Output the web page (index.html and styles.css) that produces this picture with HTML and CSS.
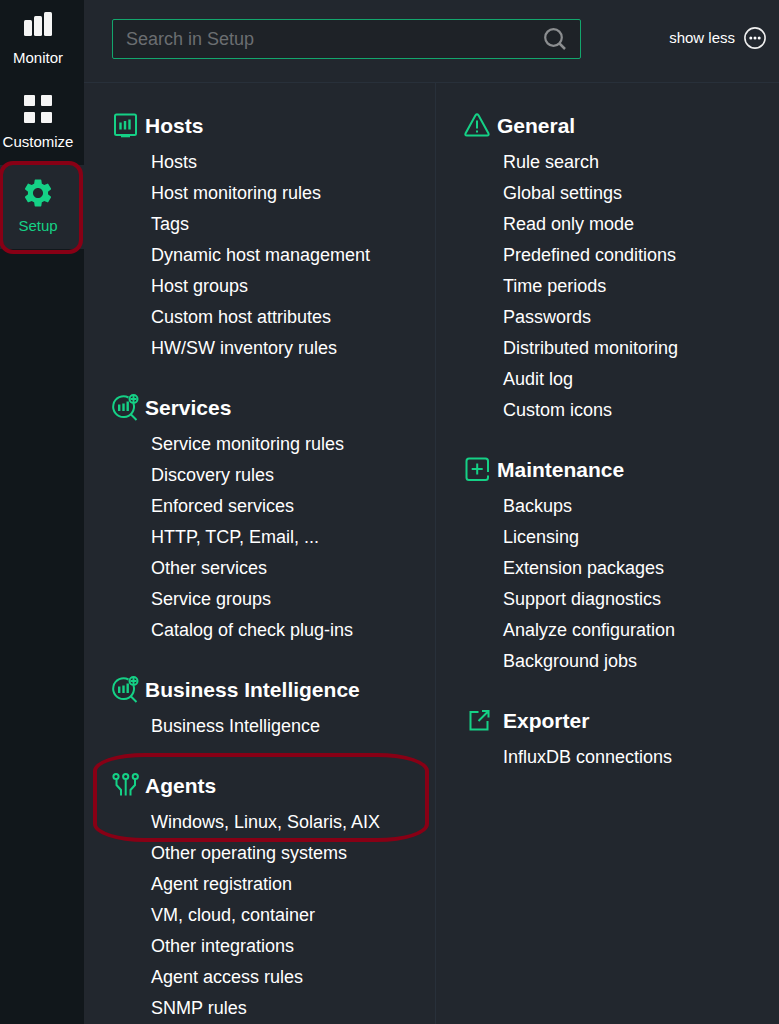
FILE: index.html
```
<!DOCTYPE html>
<html lang="en">

<head>
  <meta charset="UTF-8">
  <meta name="viewport" content="width=device-width, initial-scale=1.0">
  <title>Setup</title>

  <link rel="stylesheet" href="styles.css">
</head>

<body>
  <nav class="sidebar">
    <a class="nav-item" href="#monitor">
      <svg class="nav-icon" viewBox="0 0 28 28" fill="#f5f5f5">
        <rect x="0" y="9" width="8" height="16" rx="1.500" />
        <rect x="10" y="5" width="8" height="20" rx="1.500" />
        <rect x="20" y="1" width="8" height="24" rx="1.500" />
      </svg>
      <span>Monitor</span>
    </a>
    <a class="nav-item" href="#customize">
      <svg class="nav-icon" viewBox="0 0 28 28" fill="#f5f5f5">
        <rect x="0" y="0" width="11" height="11" rx="1" />
        <rect x="17" y="0" width="11" height="11" rx="1" />
        <rect x="0" y="17" width="11" height="11" rx="1" />
        <rect x="17" y="17" width="11" height="11" rx="1" />
      </svg>
      <span>Customize</span>
    </a>
    <a class="nav-item active" href="#setup">
      <svg class="nav-icon" viewBox="2 2 20 20" fill="#15d186">
        <path d="M19.14 12.94c.04-.3.06-.61.06-.94 0-.32-.02-.64-.07-.94l2.03-1.58a.49.49 0 0 0 .12-.61l-1.92-3.32a.488.488 0 0 0-.59-.22l-2.39.96c-.5-.38-1.03-.7-1.62-.94l-.36-2.54a.484.484 0 0 0-.48-.41h-3.84c-.24 0-.43.17-.47.41l-.36 2.54c-.59.24-1.13.57-1.62.94l-2.39-.96c-.22-.08-.47 0-.59.22L2.74 8.87c-.12.21-.08.47.12.61l2.03 1.58c-.05.3-.09.63-.09.94s.02.64.07.94l-2.03 1.58a.49.49 0 0 0-.12.61l1.92 3.32c.12.22.37.29.59.22l2.39-.96c.5.38 1.03.7 1.62.94l.36 2.54c.05.24.24.41.48.41h3.84c.24 0 .44-.17.47-.41l.36-2.54c.59-.24 1.13-.56 1.62-.94l2.39.96c.22.08.47 0 .59-.22l1.92-3.32c.12-.22.07-.47-.12-.61l-2.01-1.58zM12 15.6c-1.98 0-3.6-1.62-3.6-3.6s1.62-3.6 3.6-3.6 3.6 1.62 3.6 3.6-1.62 3.6-3.6 3.6z" />
      </svg>
      <span>Setup</span>
      <i class="marker marker-nav"></i>
    </a>
  </nav>

  <main>
    <header class="topbar">
      <form class="search">
        <input type="text" name="search" aria-label="Search in Setup" placeholder="Search in Setup">
        <button class="search-btn" type="button" aria-label="Search">
          <svg width="22" height="22" viewBox="0 0 22 22" fill="none" stroke="#8c8e90" stroke-width="2.200">
            <circle cx="9.500" cy="9.500" r="8.300" />
            <path d="M15.500 15.500L21 21" stroke-width="2.500" />
          </svg>
        </button>
      </form>
      <button class="show-less" type="button">
        show less
        <svg width="22" height="22" viewBox="0 0 22 22">
          <circle cx="11" cy="11" r="10.100" fill="none" stroke="#eee" stroke-width="1.600" />
          <g fill="#fff">
            <circle cx="6.800" cy="11" r="1.500" />
            <circle cx="11" cy="11" r="1.500" />
            <circle cx="15.200" cy="11" r="1.500" />
          </g>
        </svg>
      </button>
    </header>

    <div class="columns">
      <div class="column">
        <section class="topic">
          <h2>
            <svg class="icon" viewBox="0 0 26 26">
              <rect x="3" y="2.500" width="21" height="20.500" rx="1.500" />
              <path d="M9 24.300h9" />
              <path d="M8.500 10.500v7M13 9v8.500M17.500 7.500v10" stroke-width="2.400" />
            </svg>
            Hosts
          </h2>
          <ul>
            <li><a href="#">Hosts</a></li>
            <li><a href="#">Host monitoring rules</a></li>
            <li><a href="#">Tags</a></li>
            <li><a href="#">Dynamic host management</a></li>
            <li><a href="#">Host groups</a></li>
            <li><a href="#">Custom host attributes</a></li>
            <li><a href="#">HW/SW inventory rules</a></li>
          </ul>
        </section>

        <section class="topic">
          <h2>
            <svg class="icon" viewBox="0 0 26 26">
              <path d="M16.500 3.500A10.400 10.400 0 1 0 21.500 9.500M18.500 20L24.500 26" />
              <path d="M7.200 10.500v6.500M11.500 9.500v7.500M15.700 7.500v9.500" stroke-width="2.400" />
              <circle cx="21.500" cy="5" r="4" />
              <path d="M21.500 2v6M18.500 5h6" />
            </svg>
            Services
          </h2>
          <ul>
            <li><a href="#">Service monitoring rules</a></li>
            <li><a href="#">Discovery rules</a></li>
            <li><a href="#">Enforced services</a></li>
            <li><a href="#">HTTP, TCP, Email, ...</a></li>
            <li><a href="#">Other services</a></li>
            <li><a href="#">Service groups</a></li>
            <li><a href="#">Catalog of check plug-ins</a></li>
          </ul>
        </section>

        <section class="topic">
          <h2>
            <svg class="icon" viewBox="0 0 26 26">
              <path d="M16.500 3.500A10.400 10.400 0 1 0 21.500 9.500M18.500 20L24.500 26" />
              <path d="M7.200 10.500v6.500M11.500 9.500v7.500M15.700 7.500v9.500" stroke-width="2.400" />
              <circle cx="21.500" cy="5" r="4" />
              <path d="M21.500 2v6M18.500 5h6" />
            </svg>
            Business Intelligence
          </h2>
          <ul>
            <li><a href="#">Business Intelligence</a></li>
          </ul>
        </section>

        <section class="topic">
          <h2>
            <svg class="icon" viewBox="0 0 26 26">
              <circle cx="4" cy="4.500" r="2.600" />
              <circle cx="13.700" cy="4.500" r="2.600" />
              <circle cx="23.300" cy="4.500" r="2.600" />
              <path d="M4.500 7v6l4.500 5v5.500M13.700 7v16.500M23 7v6l-4.500 5v5.500" />
            </svg>
            Agents
          </h2>
          <ul>
            <li><a href="#">Windows, Linux, Solaris, AIX</a></li>
            <li><a href="#">Other operating systems</a></li>
            <li><a href="#">Agent registration</a></li>
            <li><a href="#">VM, cloud, container</a></li>
            <li><a href="#">Other integrations</a></li>
            <li><a href="#">Agent access rules</a></li>
            <li><a href="#">SNMP rules</a></li>
          </ul>
          <i class="marker marker-topic"></i>
        </section>
      </div>

      <div class="column">
        <section class="topic">
          <h2>
            <svg class="icon" viewBox="0 0 26 26">
              <path d="M11.500 3.300L1.500 21.500Q.8 23.500 2.800 23.500H23.200Q25.200 23.500 24.500 21.500L14.500 3.300Q13 1.200 11.500 3.300Z" />
              <path d="M13 8.500v8M13 18.500v2" />
            </svg>
            General
          </h2>
          <ul>
            <li><a href="#">Rule search</a></li>
            <li><a href="#">Global settings</a></li>
            <li><a href="#">Read only mode</a></li>
            <li><a href="#">Predefined conditions</a></li>
            <li><a href="#">Time periods</a></li>
            <li><a href="#">Passwords</a></li>
            <li><a href="#">Distributed monitoring</a></li>
            <li><a href="#">Audit log</a></li>
            <li><a href="#">Custom icons</a></li>
          </ul>
        </section>

        <section class="topic">
          <h2>
            <svg class="icon" viewBox="0 0 26 26">
              <path d="M24 16V5Q24 2.500 21.500 2.500H5Q2.500 2.500 2.500 5V21.500Q2.500 24 5 24H21.500Q24 24 24 21.500V19.500" />
              <path d="M13.200 7.500v11M7.700 13h11" />
            </svg>
            Maintenance
          </h2>
          <ul>
            <li><a href="#">Backups</a></li>
            <li><a href="#">Licensing</a></li>
            <li><a href="#">Extension packages</a></li>
            <li><a href="#">Support diagnostics</a></li>
            <li><a href="#">Analyze configuration</a></li>
            <li><a href="#">Background jobs</a></li>
          </ul>
        </section>

        <section class="topic topic-plain">
          <h2>
            <svg class="icon" viewBox="0 0 26 26">
              <path d="M14.500 5H6.500V22.500H23.500V14" />
              <path d="M14.500 14L24 4.500M18 4H24.500V10.500" />
            </svg>
            Exporter
          </h2>
          <ul>
            <li><a href="#">InfluxDB connections</a></li>
          </ul>
        </section>
      </div>
    </div>
  </main>
</body>

</html>
```
FILE: styles.css
```
* {
  box-sizing: border-box;
}

body {
  background: #22272e;
  color: #fff;
  display: flex;
  font-family: "Liberation Sans", Arial, sans-serif;
  margin: 0;
  min-height: 100vh;
}

a {
  color: inherit;
  text-decoration: none;
}

/* sidebar */
.sidebar {
  background: #11171b;
  flex: 0 0 84px;
  margin-top: -3px;
}

.nav-item {
  align-items: center;
  display: flex;
  flex-direction: column;
  font-size: 15px;
  gap: 10px;
  height: 84px;
  line-height: 18px;
  padding: 14px 8px 0 0;
  position: relative;
}

.nav-item.active {
  background: #22272e;
  color: #15d186;
}

.nav-icon {
  height: 28px;
  width: 28px;
}

/* red markers drawn over the menu */
.marker {
  border: 4px solid #880015;
  pointer-events: none;
  position: absolute;
}

.marker-nav {
  border-radius: 14px;
  inset: -4px 1px -5px -1px;
}

.marker-topic {
  border-radius: 52px / 18px;
  height: 89px;
  left: 9px;
  right: 6px;
  top: -12px;
}

/* top bar */
main {
  flex: 1;
}

.topbar {
  align-items: center;
  border-bottom: 1px solid #28303a;
  display: flex;
  gap: 88px;
  height: 83px;
  padding: 0 13px 4px 28px;
}

.search {
  align-items: center;
  background: #1e2227;
  border: 1px solid #13a66d;
  border-radius: 2px;
  display: flex;
  flex: 1;
  height: 40px;
  padding: 0 14px 0 13px;
}

.search input {
  background: none;
  border: 0;
  color: #fff;
  flex: 1;
  font: 18px "Liberation Sans", Arial, sans-serif;
  min-width: 0;
  outline: 0;
  padding: 0;
}

.search input::placeholder {
  color: #6b6e71;
}

button {
  align-items: center;
  background: none;
  border: 0;
  color: inherit;
  cursor: pointer;
  display: flex;
  font: 15px "Liberation Sans", Arial, sans-serif;
  padding: 0;
}

.show-less {
  gap: 9px;
  padding-bottom: 3px;
  white-space: nowrap;
}

/* menu topics */
.columns {
  display: grid;
  grid-template-columns: 352fr 343fr;
}

.column {
  padding-top: 22px;
}

.column:first-child {
  border-right: 1px solid #28303a;
}

.topic {
  margin-bottom: 23px;
  position: relative;
}

.topic h2 {
  align-items: center;
  display: flex;
  font-size: 21px;
  gap: 7px;
  height: 42px;
  margin: 0;
  padding-left: 28px;
}

.topic-plain h2 {
  gap: 13px;
}

.icon {
  fill: none;
  height: 26px;
  margin-bottom: 3px;
  overflow: visible;
  stroke: #15d186;
  stroke-width: 2px;
  width: 26px;
}

.topic ul {
  font-size: 18px;
  line-height: 31px;
  list-style: none;
  margin: 0;
  padding: 0 0 0 67px;
}
```
